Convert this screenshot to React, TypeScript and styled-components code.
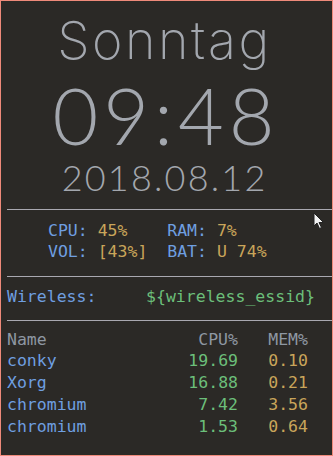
import React from "react";
import styled, { createGlobalStyle } from "styled-components";

const Global = createGlobalStyle`
  html, body { margin: 0; padding: 0; background: #2b2926; }
  #root { width: 333px; height: 456px; }
`;

const Frame = styled.div`
  position: relative;
  box-sizing: border-box;
  width: 333px;
  height: 456px;
  border: 1px solid #ef8a7a;
  background: #2b2926;
  display: flex;
  flex-direction: column;
  padding: 14px 0 0 6px;
  overflow: hidden;
`;

const Header = styled.header`
  display: flex;
  flex-direction: column;
  align-items: center;
  padding-right: 12px;
  color: #a3a7ae;
`;

const Day = styled.div`
  font-family: Inter, "Noto Sans", sans-serif;
  font-weight: 200;
  font-size: 52px;
  line-height: 52px;
  letter-spacing: 2.5px;
  margin-right: -2px;
`;

const Time = styled.div`
  font-family: Lato, "Noto Sans", sans-serif;
  font-weight: 300;
  font-size: 79px;
  line-height: 74px;
  margin-top: 11px;
  letter-spacing: 5px;
  margin-right: -5px;
`;

const DateLine = styled.div`
  font-family: Lato, "Noto Sans", sans-serif;
  font-weight: 300;
  font-size: 36px;
  line-height: 34px;
  margin-top: 8px;
  letter-spacing: 2.2px;
  margin-right: -2.2px;
`;

const Rule = styled.hr<{ $top: number }>`
  border: 0;
  height: 1px;
  background: #a9a8b0;
  margin: ${(p) => p.$top}px 0 0 0;
  width: 100%;
`;

const Mono = styled.div`
  font-family: "DejaVu Sans Mono", "Liberation Mono", monospace;
  font-size: 16.5px;
`;

const Stats = styled(Mono)`
  display: grid;
  grid-template-columns: 12ch auto;
  line-height: 21px;
  padding: 10px 0 0 41px;
`;

const Label = styled.span`
  color: #6f9fe0;
`;

const Value = styled.span`
  color: #c9a55a;
`;

const Wireless = styled(Mono)`
  display: grid;
  grid-template-columns: 14ch auto;
  line-height: 21px;
  padding-top: 8.5px;
`;

const Essid = styled.span`
  color: #6cbf7a;
`;

const Table = styled(Mono)`
  display: grid;
  grid-template-columns: 1fr 80px 70px;
  line-height: 21.75px;
  padding: 8px 24px 0 0;
`;

const Cell = styled.span<{ $kind: "head" | "name" | "cpu" | "mem"; $right?: boolean }>`
  text-align: ${(p) => (p.$right ? "right" : "left")};
  color: ${(p) =>
    p.$kind === "head"
      ? "#8e97a2"
      : p.$kind === "name"
      ? "#6f9fe0"
      : p.$kind === "cpu"
      ? "#6cbf7a"
      : "#c9a55a"};
`;

const Cursor = styled.svg`
  position: absolute;
  left: 312px;
  top: 211px;
`;

const procs = [
  { name: "conky", cpu: "19.69", mem: "0.10" },
  { name: "Xorg", cpu: "16.88", mem: "0.21" },
  { name: "chromium", cpu: "7.42", mem: "3.56" },
  { name: "chromium", cpu: "1.53", mem: "0.64" },
];

export default function App() {
  return (
    <>
      <Global />
      <Frame>
        <Header>
          <Day>Sonntag</Day>
          <Time>09:48</Time>
          <DateLine>2018.08.12</DateLine>
        </Header>
        <Rule $top={15} />
        <Stats>
          <span>
            <Label>CPU:</Label> <Value>45%</Value>
          </span>
          <span>
            <Label>RAM:</Label> <Value>7%</Value>
          </span>
          <span>
            <Label>VOL:</Label> <Value>[43%]</Value>
          </span>
          <span>
            <Label>BAT:</Label> <Value>U 74%</Value>
          </span>
        </Stats>
        <Rule $top={14} />
        <Wireless>
          <Label>Wireless:</Label>
          <Essid>{"${wireless_essid}"}</Essid>
        </Wireless>
        <Rule $top={13} />
        <Table>
          <Cell $kind="head">Name</Cell>
          <Cell $kind="head" $right>CPU%</Cell>
          <Cell $kind="head" $right>MEM%</Cell>
          {procs.map((p, i) => (
            <React.Fragment key={i}>
              <Cell $kind="name">{p.name}</Cell>
              <Cell $kind="cpu" $right>{p.cpu}</Cell>
              <Cell $kind="mem" $right>{p.mem}</Cell>
            </React.Fragment>
          ))}
        </Table>
        <Cursor width="12" height="18" viewBox="0 0 12 18">
          <path d="M1 1 L1 14 L4 11 L6.5 16.5 L8.5 15.5 L6 10.5 L10.5 10.5 Z" fill="#f2f2f2" stroke="#222" strokeWidth="1" strokeLinejoin="round" />
        </Cursor>
      </Frame>
    </>
  );
}
